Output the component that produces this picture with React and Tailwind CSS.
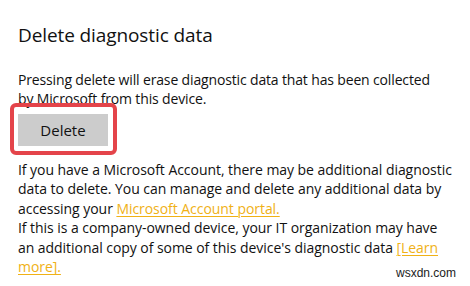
export default function App() {
  const link = "text-[#f0b116] underline underline-offset-2 decoration-1";

  return (
    <div
      className="w-[470px] h-[286px] bg-white text-[#111] relative overflow-hidden"
      style={{ fontFamily: '"Open Sans", "Noto Sans", sans-serif' }}
    >
      <div className="pl-[18px] pt-[22px] flex flex-col">
        {/* TITLE */}
        <div className="text-[19px] leading-[26px] tracking-[-0.1px] whitespace-nowrap">Delete diagnostic data</div>

        {/* INTRO */}
        <div className="mt-[22px] text-[14px] leading-[19px] tracking-[-0.15px] whitespace-nowrap">
          Pressing delete will erase diagnostic data that has been collected
          <br />
          by Microsoft from this device.
        </div>

        {/* BUTTON */}
        <div className="-ml-[8px] -mt-[5px] w-[107px] h-[52px] border-4 border-[#e4444a] rounded-[6px] pl-[4px] pt-[7px]">
          <button className="w-[90px] h-[32px] bg-[#cccccc] text-[15px] leading-none text-[#111]">
            Delete
          </button>
        </div>

        {/* MORE INFO */}
        <div className="mt-[5px] text-[14px] leading-[19.4px] tracking-[-0.05px] whitespace-nowrap">
          If you have a Microsoft Account, there may be additional diagnostic
          <br />
          data to delete. You can manage and delete any additional data by
          <br />
          accessing your <span className={link}>Microsoft Account portal.</span>
          <br />
          If this is a company-owned device, your IT organization may have
          <br />
          an additional copy of some of this device's diagnostic data{" "}
          <span className={link}>[Learn</span>
          <br />
          <span className={link}>more].</span>
        </div>
      </div>

      {/* WATERMARK */}
      <div
        className="absolute left-[396px] top-[264px] text-[12px] text-[#222]"
        style={{ fontFamily: '"Liberation Sans", sans-serif' }}
      >
        wsxdn.com
      </div>
    </div>
  );
}
